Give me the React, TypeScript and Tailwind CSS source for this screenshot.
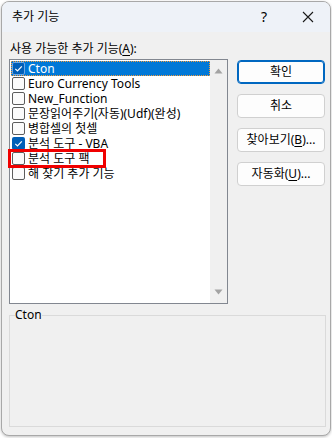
import React from "react";

const items = [
  { label: "Cton", checked: true },
  { label: "Euro Currency Tools", checked: false },
  { label: "New_Function", checked: false },
  { label: "문장읽어주기(자동)(Udf)(완성)", checked: false },
  { label: "병합셀의 첫셀", checked: false },
  { label: "분석 도구 - VBA", checked: true },
  { label: "분석 도구 팩", checked: false },
  { label: "해 찾기 추가 기능", checked: false },
];

function CheckBox({ checked, selected }: { checked: boolean; selected?: boolean }) {
  if (checked) {
    return (
      <div
        className={`w-[13px] h-[13px] rounded-[2px] bg-[#005fb8] flex items-center justify-center shrink-0 ${
          selected ? "border border-[#6aa8e8]" : ""
        }`}
      >
        <svg width="11" height="11" viewBox="0 0 11 11">
          <path d="M2.3 5.8 L4.5 8 L8.8 3.3" fill="none" stroke="#ffffff" strokeWidth="1.2" />
        </svg>
      </div>
    );
  }
  return <div className="w-[13px] h-[13px] rounded-[2px] border border-[#5c5c5c] bg-[#fbfbfb] shrink-0" />;
}

function Btn({ children, primary }: { children: React.ReactNode; primary?: boolean }) {
  return (
    <button
      className={`w-[88px] h-[24px] rounded-[4px] bg-[#fdfdfd] text-[12px] leading-[16px] text-black flex items-center justify-center ${
        primary ? "border border-[#0067c0] shadow-[inset_0_0_0_1px_#0067c0]" : "border border-[#d0d0d0]"
      }`}
    >
      {children}
    </button>
  );
}

export default function App() {
  return (
    <div className="w-[332px] h-[438px] bg-white pl-[1px] pt-[1px] font-['Noto_Sans','Noto_Sans_CJK_KR',sans-serif] text-black">
      <div className="w-[330px] h-[435px] rounded-[8px] border border-[#a8a8a8] bg-[#f0f0f0] overflow-hidden shadow-[0_1px_3px_rgba(0,0,0,0.25)] flex flex-col">
        {/* title bar */}
        <div className="h-[30px] bg-[#eef2f8] flex items-center shrink-0">
          <span className="pl-[10px] text-[12px] leading-[16px] flex-1">추가 기능</span>
          <span className="w-[44px] text-center text-[14px] leading-[16px]">?</span>
          <span className="w-[44px] flex items-center justify-center">
            <svg width="12" height="12" viewBox="0 0 12 12">
              <path d="M1 1 L11 11 M11 1 L1 11" stroke="#1a1a1a" strokeWidth="1.1" />
            </svg>
          </span>
        </div>

        {/* body */}
        <div className="flex flex-col pl-[7px] pr-[5px]">
          <div className="mt-[9px] h-[16px] text-[12px] leading-[16px] pl-[1px]">
            사용 가능한 추가 기능(<span className="underline underline-offset-2">A</span>):
          </div>

          <div className="mt-[2px] flex gap-[9px]">
            {/* list */}
            <div className="relative w-[220px] h-[245px] border border-[#828790] bg-white flex">
              <div className="flex-1 pt-[1px] pl-[1px]">
                {items.map((it, i) => {
                  const sel = i === 0;
                  return (
                    <div
                      key={it.label}
                      className={`h-[15px] flex items-center gap-[3px] pl-[1px] text-[12px] leading-[15px] overflow-hidden ${
                        sel ? "bg-[#0078d7] text-white outline outline-1 outline-dotted outline-[#f39c3c] -outline-offset-1" : ""
                      }`}
                    >
                      <CheckBox checked={it.checked} selected={sel} />
                      <span className="whitespace-nowrap">{it.label}</span>
                    </div>
                  );
                })}
              </div>
              <div className="w-[17px] bg-[#f0f0f0] flex flex-col items-center justify-between py-[8px]">
                <svg width="9" height="6" viewBox="0 0 9 6">
                  <path d="M4.5 0.5 L8.5 5.5 L0.5 5.5 Z" fill="#a3a3a3" />
                </svg>
                <svg width="9" height="6" viewBox="0 0 9 6">
                  <path d="M0.5 0.5 L8.5 0.5 L4.5 5.5 Z" fill="#a3a3a3" />
                </svg>
              </div>

              {/* red annotation */}
              <div className="absolute left-[-2px] top-[89px] w-[98px] h-[19px] border-[3px] border-[#f00000]" />
            </div>

            {/* buttons */}
            <div className="mt-[1px] flex flex-col gap-[10px]">
              <Btn primary>확인</Btn>
              <Btn>취소</Btn>
              <Btn>
                찾아보기(<span className="underline underline-offset-2">B</span>)...
              </Btn>
              <Btn>
                자동화(<span className="underline underline-offset-2">U</span>)...
              </Btn>
            </div>
          </div>

          {/* group box */}
          <div className="relative mt-[11px] w-[317px] h-[112px] border border-[#dadada]">
            <span className="absolute left-[5px] top-[-9px] bg-[#f0f0f0] text-[12px] leading-[16px]">Cton</span>
          </div>
        </div>
      </div>
    </div>
  );
}
